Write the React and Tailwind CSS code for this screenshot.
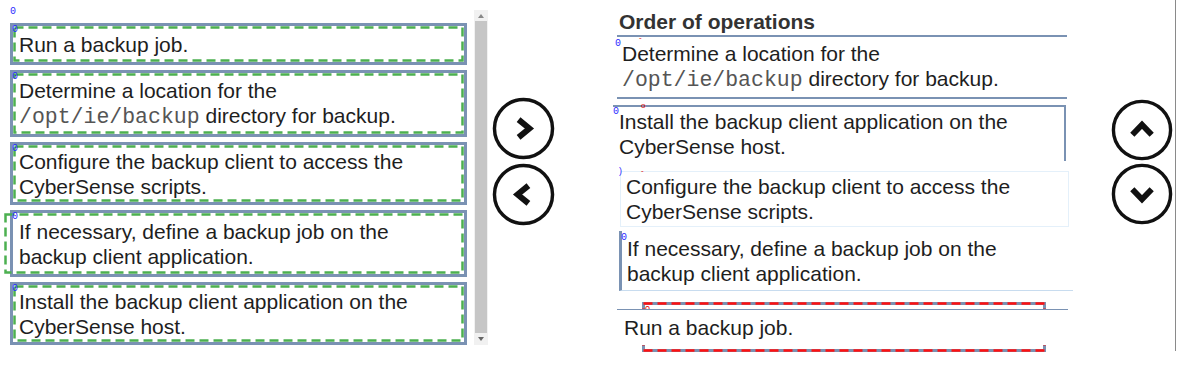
import React from 'react';

const font = { fontFamily: '"Liberation Sans", Arial, sans-serif' };

function Mono({ children }) {
  return <span className="font-['Liberation_Mono',monospace] text-[21.5px] text-[#555]">{children}</span>;
}

function Tag({ className = "" }) {
  return <span className={"absolute text-[10px] leading-none text-[#2a2aff] font-['Liberation_Mono',monospace] " + className}>0</span>;
}

function Dashes({ color }) {
  return (
    <svg className="absolute inset-0 w-full h-full overflow-visible pointer-events-none">
      <rect x="1.5" y="1.5" className="w-[calc(100%-3px)] h-[calc(100%-3px)]" fill="none" stroke={color} strokeWidth="2.5" strokeDasharray="9 5" />
    </svg>
  );
}

function SourceBox({ h, children, shifted }) {
  return (
    <div className={"relative border-[3px] border-[#7a92b3] bg-white " + h}>
      {shifted ? (
        <div className="absolute top-0 bottom-0 -left-[9px] right-0">
          <Dashes color="#4cb050" />
        </div>
      ) : (
        <Dashes color="#4cb050" />
      )}
      <Tag className="left-[-1px] top-[-1px]" />
      <div className="relative h-full flex items-center pl-[6px] text-[21px] leading-[25px] text-[#1e1e1e]">
        <div>{children}</div>
      </div>
    </div>
  );
}

function Chevron({ dir, size = "w-[63px] h-[63px]" }) {
  const pts = {
    right: "-5,-9 6,0 -5,9",
    left: "5,-9 -6,0 5,9",
    up: "-10,5 0,-5.5 10,5",
    down: "-10,-5 0,5.5 10,-5",
  }[dir];
  return (
    <svg viewBox="-32 -32 64 64" className={size}>
      <circle cx="0" cy="0" r="29.5" fill="white" stroke="#111" strokeWidth="3.5" />
      <polyline points={pts} fill="none" stroke="#111" strokeWidth="6" strokeLinejoin="miter" />
    </svg>
  );
}

export default function App() {
  return (
    <div className="w-[1178px] h-[378px] bg-white overflow-hidden" style={font}>
      <div className="w-[1176px] h-[351px] border-r border-[#8a8a8a] flex items-start">

        {/* Left list with scrollbar */}
        <div className="relative ml-[10px] mt-[10px] flex items-start">
          <Tag className="left-[0px] top-[-3px]" />
          <div className="w-[457px] mt-[13px] flex flex-col gap-[5px]">
            <SourceBox h="h-[42px]">Run a backup job.</SourceBox>
            <SourceBox h="h-[67px]">
              Determine a location for the<br />
              <Mono>/opt/ie/backup</Mono> directory for backup.
            </SourceBox>
            <SourceBox h="h-[63px]">
              Configure the backup client to access the<br />CyberSense scripts.
            </SourceBox>
            <SourceBox h="h-[67px]" shifted>
              If necessary, define a backup job on the<br />backup client application.
            </SourceBox>
            <SourceBox h="h-[63px]">
              Install the backup client application on the<br />CyberSense host.
            </SourceBox>
          </div>

          {/* scrollbar */}
          <div className="ml-[7px] w-[14px] h-[335px] bg-[#f1f1f1] flex flex-col items-center">
            <div className="h-[11px] flex items-center">
              <div className="w-0 h-0 border-l-[3px] border-r-[3px] border-b-[4px] border-l-transparent border-r-transparent border-b-[#888]" />
            </div>
            <div className="flex-1 w-[12px] bg-[#c6c6c6]" />
            <div className="h-[12px] flex items-center">
              <div className="w-0 h-0 border-l-[3px] border-r-[3px] border-t-[4px] border-l-transparent border-r-transparent border-t-[#666]" />
            </div>
          </div>

          {/* move buttons */}
          <div className="ml-[4px] mt-[87px] flex flex-col gap-[3px]">
            <Chevron dir="right" />
            <Chevron dir="left" />
          </div>
        </div>

        {/* Right: Order of operations */}
        <div className="ml-[58px] w-[462px] flex flex-col">
          <div className="pl-[6px] mt-[6px] h-[29px] text-[21px] font-bold text-[#333]">Order of operations</div>

          <div className="relative ml-[4px] w-[450px] h-[64px] border-t-2 border-b-2 border-[#7a92b3] bg-white flex items-center pl-[5px] text-[21px] leading-[25px] text-[#1e1e1e]">
            <Tag className="left-[-2px] top-[2px]" />
            <span className="absolute left-[22px] -top-[3px] text-[8px] leading-none text-[#e00000]">-</span>
            <div>
              Determine a location for the<br />
              <Mono>/opt/ie/backup</Mono> directory for backup.
            </div>
          </div>

          <div className="relative mt-[6px] w-[453px] h-[56px] border-t-2 border-r-2 border-[#7a92b3] bg-white flex items-center pl-[6px] text-[21px] leading-[25px] text-[#1e1e1e]">
            <Tag className="left-[0px] top-[0px]" />
            <span className="absolute left-[28px] -top-[5px] text-[8px] leading-none text-[#e00000]">o</span>
            <div>Install the backup client application on the<br />CyberSense host.</div>
          </div>

          <div className="relative mt-[10px] ml-[7px] w-[449px] h-[56px] border border-[#e4f0fa] bg-white flex items-center pl-[5px] text-[21px] leading-[25px] text-[#1e1e1e]">
            <span className="absolute left-[-2px] -top-[5px] text-[9px] leading-none text-[#2a2aff]">)</span>
            <span className="absolute left-[20px] -top-[5px] text-[8px] leading-none text-[#e00000]">-</span>
            <div>Configure the backup client to access the<br />CyberSense scripts.</div>
          </div>

          <div className="relative mt-[4px] ml-[6px] w-[454px] h-[60px] border-l-[3px] border-b border-l-[#7a92b3] border-b-[#c8dcef] bg-white flex items-center pl-[5px] text-[21px] leading-[25px] text-[#1e1e1e]">
            <Tag className="left-[-1px] top-[2px]" />
            <div>If necessary, define a backup job on the<br />backup client application.</div>
          </div>

          <div className="relative mt-[11px] h-[51px]">
            <div className="absolute left-[29px] top-0 w-[404px] h-[50px] border-[3px] border-[#7a92b3]">
              <div className="absolute -inset-[3px]">
                <Dashes color="#ff1010" />
              </div>
              <span className="absolute left-[0px] top-[0px] text-[9px] leading-none text-[#e00000]">0</span>
            </div>
            <div className="absolute left-[4px] top-[7px] w-[451px] h-[36px] border-t border-[#7a92b3] bg-white flex items-center pl-[7px] text-[21px] text-[#1e1e1e]">
              Run a backup job.
            </div>
          </div>
        </div>

        {/* up / down */}
        <div className="ml-auto mr-[2px] mt-[99px] flex flex-col gap-[2px]">
          <Chevron dir="up" size="w-[62px] h-[62px]" />
          <Chevron dir="down" size="w-[62px] h-[62px]" />
        </div>
      </div>
    </div>
  );
}
